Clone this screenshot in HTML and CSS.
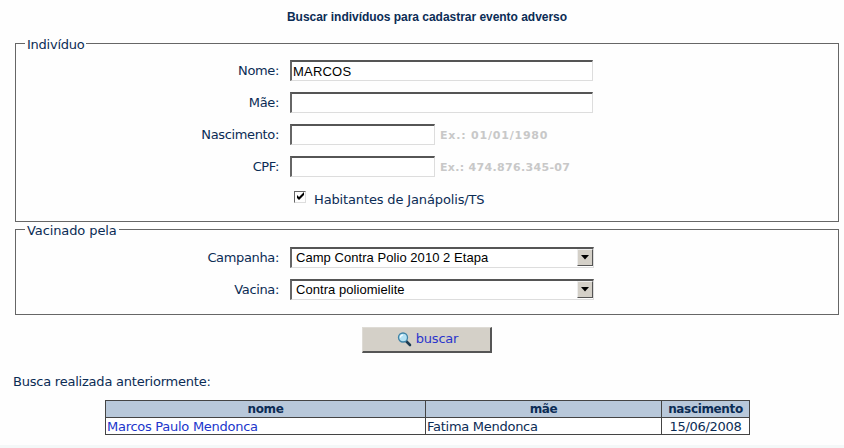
FILE: index.html
```html
<!DOCTYPE html>
<html lang="pt-BR">
<head>
<meta charset="utf-8">
<title>Buscar indivíduos</title>
<link rel="stylesheet" href="styles.css">
</head>
<body>
<h1><span>Buscar indivíduos para cadastrar evento adverso</span></h1>
<form>
  <fieldset class="person">
    <legend>Indivíduo</legend>
    <div class="row"><label for="nome">Nome:</label><input class="field" id="nome" type="text" value="MARCOS"></div>
    <div class="row"><label for="mae">Mãe:</label><input class="field" id="mae" type="text"></div>
    <div class="row"><label for="nasc">Nascimento:</label><input class="field short" id="nasc" type="text"><span class="hint hint-date">Ex.: 01/01/1980</span></div>
    <div class="row"><label for="cpf">CPF:</label><input class="field short" id="cpf" type="text"><span class="hint">Ex.: 474.876.345-07</span></div>
    <div class="row check-row">
      <span class="check"><svg width="9" height="9" viewBox="0 0 9 9"><path d="M1 3v3l2 2 5-5V0L3 5z" fill="#000"/></svg></span>
      <span class="check-label">Habitantes de Janápolis/TS</span>
    </div>
  </fieldset>
  <fieldset class="vaccine">
    <legend class="wide">Vacinado pela</legend>
    <div class="row"><label>Campanha:</label><div class="select"><span class="value">Camp Contra Polio 2010 2 Etapa</span><span class="arrow"><svg width="8" height="5" viewBox="0 0 8 5"><path d="M0 0h8L4 4.6z" fill="#000"/></svg></span></div></div>
    <div class="row"><label>Vacina:</label><div class="select"><span class="value">Contra poliomielite</span><span class="arrow"><svg width="8" height="5" viewBox="0 0 8 5"><path d="M0 0h8L4 4.6z" fill="#000"/></svg></span></div></div>
  </fieldset>
  <button type="button">
    <svg width="15" height="15" viewBox="0 0 15 15"><path d="M9 9l4 4" stroke="#1d3b52" stroke-width="2.6" stroke-linecap="round"/><circle cx="6" cy="5.5" r="4.5" fill="#b5e2f4" stroke="#3f83a6" stroke-width="1.3"/><path d="M3.5 5.5a2.5 2.5 0 0 1 2.5-2.5" fill="none" stroke="#fff" stroke-width="1.2"/></svg>
    <span>buscar</span>
  </button>
</form>
<p class="previous">Busca realizada anteriormente:</p>
<table>
  <colgroup><col class="c1"><col class="c2"><col class="c3"></colgroup>
  <tr><th>nome</th><th>mãe</th><th>nascimento</th></tr>
  <tr><td><a href="#">Marcos Paulo Mendonca</a></td><td>Fatima Mendonca</td><td class="date">15/06/2008</td></tr>
</table>
<div class="footer"></div>
</body>
</html>
```
FILE: styles.css
```css
* { box-sizing: border-box; }
body {
  margin: 0;
  height: 448px;
  overflow: hidden;
  background: #fefefe;
  color: #0b2c55;
  font: 13px/15px "DejaVu Sans", sans-serif;
  letter-spacing: -0.35px;
}
h1 {
  margin: 0;
  padding: 9px 0 0 10px;
  height: 36px;
  text-align: center;
  font: bold 12px/17px "Liberation Sans", sans-serif;
  letter-spacing: -0.03px;
}
form { width: 824px; margin-left: 15px; }
fieldset {
  margin: 0;
  padding: 4px 0 0;
  min-width: 0;
  border: 1px solid #666;
}
.person { height: 186px; padding-top: 3px; }
.vaccine { height: 93px; }
legend { margin-left: 9px; padding: 0 2px; height: 15px; line-height: 17px; letter-spacing: -0.25px; }
.wide { letter-spacing: -0.1px; }
.row { display: flex; align-items: center; height: 32px; }
.row label { width: 263px; margin-right: 11px; text-align: right; }
.field, .select {
  width: 303px;
  height: 21px;
  border: 2px solid;
  border-color: #555 #ddd #ddd #666;
  border-right-width: 1px;
  border-bottom-width: 1px;
  background: #fff;
  color: #000;
  font: 13px/17px "Liberation Sans", sans-serif;
  letter-spacing: 0.05px;
}
.field { padding: 1px 1px 0; letter-spacing: 0.2px; }
.short { width: 145px; }
.hint {
  margin: 3px 0 0 5px;
  color: #c8c8c8;
  font-size: 11px;
  font-weight: bold;
  letter-spacing: 0.32px;
}
.hint-date { letter-spacing: 0.8px; }
.check-row { padding-left: 278px; }
.check {
  display: flex;
  width: 12px;
  height: 12px;
  margin-bottom: 2px;
  padding: 0 0 0 1px;
  border: 1px solid;
  border-color: #666 #ddd #ddd #666;
}
.check-label { margin: 2px 0 0 8px; letter-spacing: -0.14px; }
.select { display: flex; width: 304px; }
.value { flex: 1; padding-left: 4px; line-height: 18px; }
.arrow {
  display: flex;
  align-items: center;
  justify-content: center;
  width: 16px;
  height: 17px;
  background: #d4d0c8;
  border: 1px solid;
  border-color: #eee #555 #555 #eee;
}
button {
  display: flex;
  align-items: center;
  justify-content: center;
  width: 130px;
  height: 26px;
  margin: 12px 0 0 347px;
  padding: 0;
  border: 1px solid;
  border-width: 1px 2px 2px 1px;
  border-color: #dedbd5 #555 #555 #dedbd5;
  background: #d4d0c8;
  color: #2a35cc;
  font: 13px/15px "DejaVu Sans", sans-serif;
  letter-spacing: -0.2px;
}
button svg { margin-left: 2px; }
button span { margin: 0 0 2px 4px; }
.previous { margin: 21px 0 0 13px; height: 26px; line-height: 16px; letter-spacing: -0.22px; }
table {
  width: 645px;
  margin-left: 105px;
  table-layout: fixed;
  border-collapse: collapse;
  letter-spacing: -0.27px;
}
.c1 { width: 320px; }
.c2 { width: 236px; }
.c3 { width: 88px; }
tr { height: 17px; }
th, td { height: 17px; padding: 1px 1px 0; border: 1px solid #444; line-height: 15px; white-space: nowrap; }
th { background: #b8c8da; font-size: 12px; letter-spacing: -0.35px; }
td { background: #fff; }
.date { text-align: center; }
a { color: #2136cc; text-decoration: none; }
.footer { height: 3px; margin-top: 10px; background: #f4f8f8; }
```
